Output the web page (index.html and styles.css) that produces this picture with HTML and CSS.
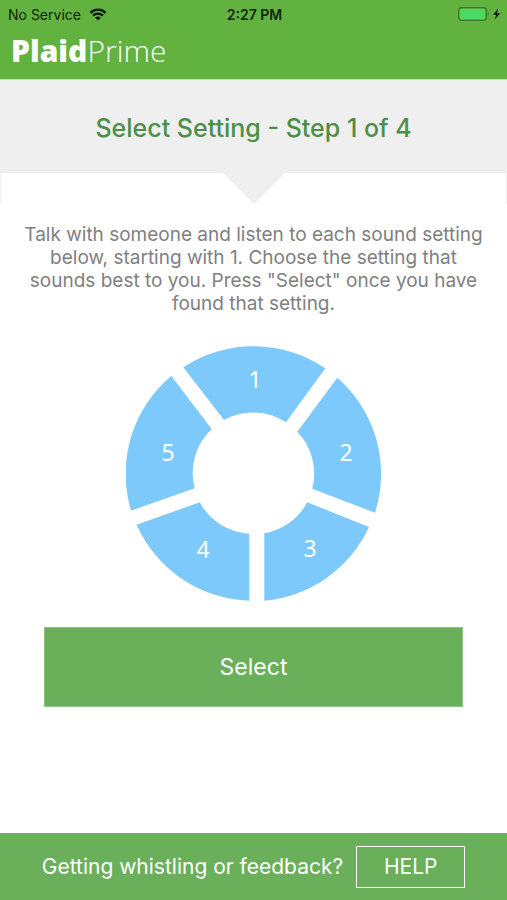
FILE: index.html
```html
<!DOCTYPE html>
<html lang="en">
<head>
<meta charset="utf-8">
<meta name="viewport" content="width=device-width, initial-scale=1">
<title>PlaidPrime</title>
<link rel="stylesheet" href="styles.css">
</head>
<body>
<header class="topbar">
  <div class="status">
    <div class="carrier">
      <span>No Service</span>
      <svg class="wifi" viewBox="0 0 18 13" aria-hidden="true">
        <path class="arc" d="M1.4 4.8a10.8 10.8 0 0 1 15.2 0M4.1 7.6a7 7 0 0 1 9.8 0"/>
        <path d="M9 12.6 6.2 9.8a4 4 0 0 1 5.6 0z"/>
      </svg>
    </div>
    <time class="clock">2:27 PM</time>
    <div class="power">
      <svg class="battery" viewBox="0 0 43 14" aria-hidden="true">
        <rect class="shell" x="0.7" y="0.7" width="27.6" height="12.6" rx="2.6"/>
        <rect class="charge" x="2" y="2" width="25" height="10" rx="1.2"/>
        <path class="cap" d="M29.8 4.8q2 2.2 0 4.4z"/>
        <path d="M40.2 1.4 35 7.8h3.2l-1.5 5 5.6-6.9h-3.3z"/>
      </svg>
    </div>
  </div>
  <div class="brand"><b>Plaid</b>Prime</div>
</header>
<main>
  <div class="step">
    <h1>Select Setting - Step 1 of 4</h1>
  </div>
  <div class="content">
    <div class="notch">
      <svg class="pointer" viewBox="0 0 62 31" aria-hidden="true"><path d="M0 0h62L31 31z"/></svg>
    </div>
    <p class="intro">Talk with someone and listen to each sound setting below, starting with 1. Choose the setting that sounds best to you. Press "Select" once you have found that setting.</p>
    <svg class="wheel" viewBox="0 0 255 255" role="group" aria-label="Sound settings">
      <a href="#setting-1">
        <path d="M57.3 21.3A127.5 127.5 0 0 1 199.3 22.3L160 76.3A60.5 60.5 0 0 0 98 74z"/>
        <text x="129" y="42">1</text>
      </a>
      <a href="#setting-2">
        <path d="M211.3 31.7A127.5 127.5 0 0 1 249 166.7L186.3 142.7A60.5 60.5 0 0 0 171.3 85.7z"/>
        <text x="220" y="115">2</text>
      </a>
      <a href="#setting-3">
        <path d="M243 181A127.5 127.5 0 0 1 138.3 254.7V187.3A60.5 60.5 0 0 0 181.3 156.3z"/>
        <text x="184" y="211">3</text>
      </a>
      <a href="#setting-4">
        <path d="M123.3 254.7A127.5 127.5 0 0 1 10.7 178.7L73.7 156.3A60.5 60.5 0 0 0 123.3 187.7z"/>
        <text x="77" y="212">4</text>
      </a>
      <a href="#setting-5">
        <path d="M5 164.7A127.5 127.5 0 0 1 45.3 30L85.7 83A60.5 60.5 0 0 0 68.7 142.3z"/>
        <text x="42" y="115">5</text>
      </a>
    </svg>
    <button class="select" type="button">Select</button>
  </div>
</main>
<footer class="help-bar">
  <span>Getting whistling or feedback?</span>
  <button class="help" type="button">HELP</button>
</footer>
</body>
</html>
```
FILE: styles.css
```css
* {
  box-sizing: border-box;
}

body {
  margin: 0;
  min-height: 100vh;
  display: flex;
  flex-direction: column;
  background: #fff;
  color: #808080;
  font-family: Inter, "Liberation Sans", sans-serif;
}

button {
  font: inherit;
  color: #fff;
  border-radius: 0;
  cursor: pointer;
}

.topbar {
  background: #62b23f;
  border-bottom: 1px solid #c4e2b6;
}

.status {
  display: grid;
  grid-template-columns: 1fr auto 1fr;
  align-items: center;
  height: 28px;
  padding: 0 6px 0 8px;
  color: #10240a;
  font-size: 14px;
}

.carrier {
  display: flex;
  align-items: center;
  gap: 8px;
}

.wifi {
  width: 18px;
  height: 13px;
  fill: #0c1a08;
}

.wifi .arc {
  fill: none;
  stroke: #0c1a08;
  stroke-width: 2.4;
}

.clock {
  font-weight: 600;
}

.power {
  display: flex;
  justify-content: flex-end;
}

.battery {
  width: 43px;
  height: 14px;
  fill: #0c1a08;
}

.battery .shell {
  fill: none;
  stroke: #3f7a2b;
  stroke-width: 1.3;
}

.battery .charge {
  fill: #4cd964;
}

.battery .cap {
  fill: #3f7a2b;
}

.brand {
  height: 51px;
  padding-left: 11px;
  color: #fff;
  font-family: "Open Sans", "Noto Sans", sans-serif;
  font-size: 30px;
  font-weight: 300;
  line-height: 46px;
}

.brand b {
  font-weight: 800;
}

main {
  flex: 1;
}

.step {
  padding: 32px 16px 29px;
  background: #efefef;
}

h1 {
  margin: 0;
  color: #4c8f48;
  font-size: 25px;
  font-weight: 500;
  line-height: 32px;
  text-align: center;
}

.content {
  display: flex;
  flex-direction: column;
  align-items: center;
}

.notch {
  display: flex;
  justify-content: center;
  width: 100%;
  border: solid #f6f6f6;
  border-width: 0 2px;
}

.pointer {
  width: 62px;
  height: 31px;
  fill: #efefef;
}

.intro {
  max-width: 460px;
  margin: 19px 0 31px;
  font-size: 19px;
  line-height: 23px;
  text-align: center;
}

.wheel {
  width: 255px;
  height: 255px;
}

.wheel path {
  fill: #7ec9fb;
}

.wheel text {
  fill: #fff;
  font-family: "Noto Sans", "Open Sans", sans-serif;
  font-size: 23px;
  text-anchor: middle;
}

.select {
  width: calc(100% - 88px);
  height: 80px;
  margin: 26px 0;
  border: 1px solid #8cc47f;
  background: #6ab05b;
  font-size: 23px;
}

.help-bar {
  display: flex;
  align-items: center;
  justify-content: center;
  gap: 13px;
  height: 67px;
  background: #6ab05b;
  color: #fff;
  font-size: 21px;
}

.help {
  width: 109px;
  height: 42px;
  padding: 0;
  border: 1px solid #fff;
  background: transparent;
}
```
